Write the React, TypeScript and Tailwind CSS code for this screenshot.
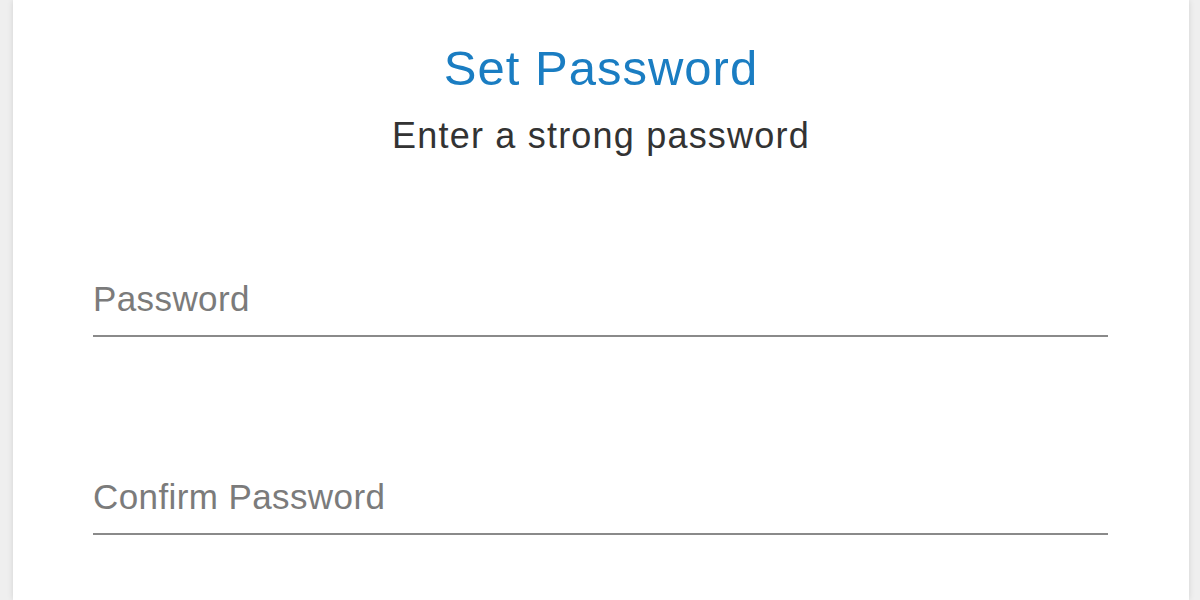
import React from "react";

export default function App() {
  return (
    <div className="w-[1200px] h-[600px] bg-[#efefef] flex overflow-hidden" style={{ fontFamily: "'Liberation Sans', Arial, sans-serif" }}>
      <div className="ml-[13px] w-[1176px] h-full bg-white shadow-[0_0_6px_rgba(0,0,0,0.12)] flex flex-col items-center">
        <h1 className="mt-[40px] text-[49px] leading-[56px] tracking-[1px] text-[#1a7dc2] font-normal">Set Password</h1>
        <p className="mt-[20px] text-[36px] leading-[40px] tracking-[1.2px] text-[#333333]">Enter a strong password</p>
        <div className="self-stretch pl-[80px] mt-[123px] flex flex-col">
          <div className="pb-[16px] border-b-2 border-[#8a8a8a] w-[1015px]">
            <span className="block text-[35px] leading-[40px] tracking-[0.4px] text-[#7b7b7b]">Password</span>
          </div>
          <div className="mt-[140px] pb-[16px] border-b-2 border-[#8a8a8a] w-[1015px]">
            <span className="block text-[35px] leading-[40px] tracking-[0.4px] text-[#7b7b7b]">Confirm Password</span>
          </div>
        </div>
      </div>
    </div>
  );
}
